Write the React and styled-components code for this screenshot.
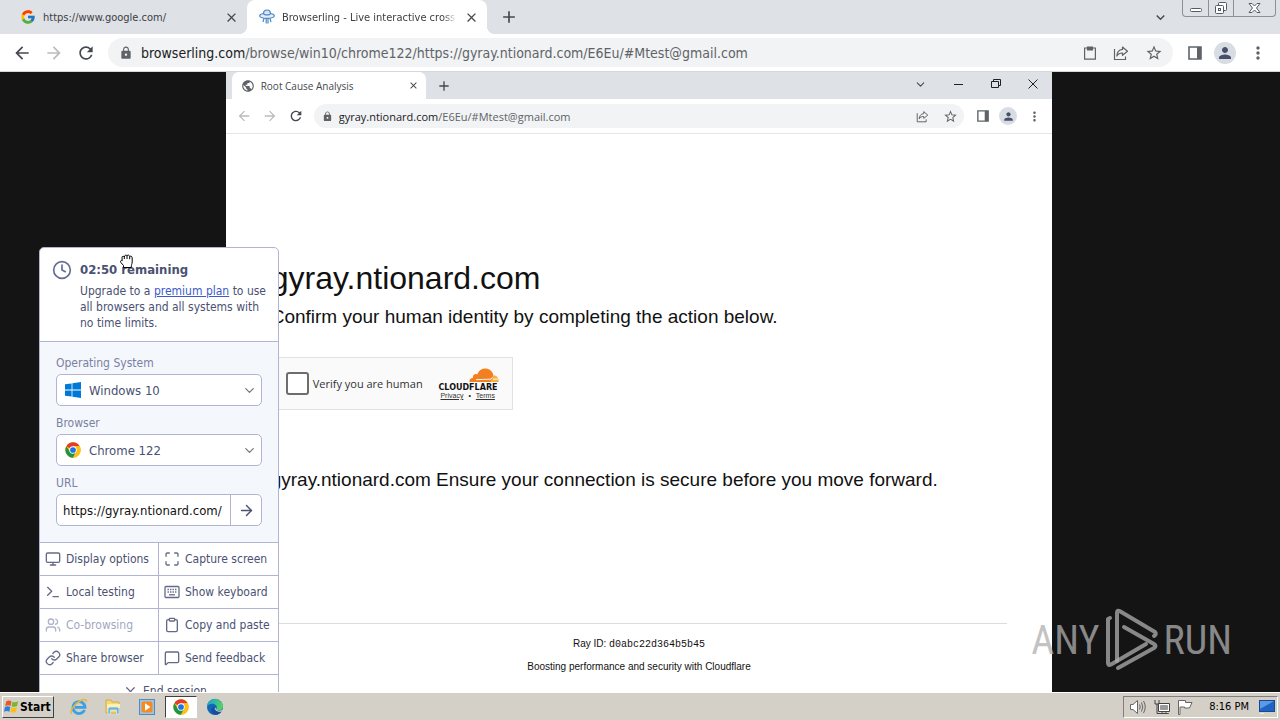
import React, { useState } from "react";
import styled, { createGlobalStyle } from "styled-components";
import {
  Clock,
  Monitor,
  Maximize,
  Terminal,
  Users,
  Clipboard,
  Link as LinkIcon,
  MessageSquare,
  ChevronDown,
  ArrowRight,
  X,
} from "lucide-react";
import {
  MdArrowBack,
  MdArrowForward,
  MdRefresh,
  MdLock,
  MdStarBorder,
  MdPerson,
  MdMoreVert,
  MdClose,
  MdAdd,
  MdPublic,
  MdExpandMore,
} from "react-icons/md";
import { FcGoogle } from "react-icons/fc";

const ui = `"DejaVu Sans Condensed", "Noto Sans", sans-serif`;
const segoe = `"Open Sans", "Noto Sans", sans-serif`;

const ChromeLogo = ({ size = 16 }) => (
  <svg width={size} height={size} viewBox="0 0 48 48">
    <circle cx="24" cy="24" r="23" fill="#fbc116" />
    <path d="M24 24L4.1 12.5A23 23 0 0 1 43.9 12.5L24 13Z" fill="#e33b2e" />
    <path d="M4.1 12.5A23 23 0 0 0 24 47L33.5 29.5L24 34L14.5 29.5Z" fill="#229342" />
    <path d="M24 13H44.2A23 23 0 0 1 24 47L33.5 29.5Z" fill="#fbc116" />
    <circle cx="24" cy="24" r="11" fill="#fff" />
    <circle cx="24" cy="24" r="8.6" fill="#1a73e8" />
  </svg>
);

const WindowsLogo = () => (
  <svg width="16" height="16" viewBox="0 0 16 16" fill="#0078d7">
    <path d="M0 2.3L6.6 1.4V7.6H0ZM7.4 1.3L16 0V7.6H7.4ZM0 8.4H6.6V14.6L0 13.7ZM7.4 8.4H16V16L7.4 14.7Z" />
  </svg>
);

const UfoLogo = () => (
  <svg width="16" height="16" viewBox="0 0 16 16" fill="none" stroke="#4f86c6" strokeWidth="1.2">
    <path d="M4.5 4.5a3.5 3.5 0 0 1 7 0" fill="#cfe0f3" />
    <path d="M4.5 4.5C1.5 5 .6 6 .7 7C1 9 4.5 9.3 8 9.3S15 9 15.3 7C15.4 6 14.5 5 11.5 4.5C11 6.3 5 6.3 4.5 4.5Z" fill="#e4eefa" />
    <path d="M5 9.3L4 13M7.2 9.3v5.2M9 9.3v5.2M11 9.3l1 3.7" />
  </svg>
);

const ShareIcon = ({ size = 16 }) => (
  <svg width={size} height={size} viewBox="0 0 16 16" fill="none" stroke="#5f6368" strokeWidth="1.2">
    <path d="M1.5 4V14.5H12.5V11.5" />
    <path d="M9.5 2L14.5 6.3L9.5 10.3V8C6.5 8 5 9 3.9 11C4 7.6 6 4.8 9.5 4.4Z" strokeLinejoin="round" />
  </svg>
);

const SidePanelIcon = ({ size = 14 }) => (
  <svg width={size} height={size} viewBox="0 0 14 14">
    <path d="M1 1H13V13H1Z" fill="none" stroke="#5f6368" strokeWidth="1.6" />
    <path d="M9 1H13V13H9Z" fill="#5f6368" />
  </svg>
);

const PasteIcon = () => (
  <svg width="14" height="14" viewBox="0 0 14 14" fill="none" stroke="#5f6368" strokeWidth="1.2">
    <path d="M1.6 2H12.4V13.2H1.6Z" />
    <path d="M4.5 1H9.5V4H4.5Z" fill="#5f6368" />
  </svg>
);

const KeyboardIcon = () => (
  <svg width="16" height="16" viewBox="0 0 16 16" fill="none" stroke="currentColor" strokeWidth="1.3">
    <rect x="1" y="2.5" width="14" height="11" rx="1" />
    <path d="M3.5 5.5h9M3.5 8h9" strokeDasharray="1.4 1.1" />
    <path d="M5 10.8h6" />
  </svg>
);

const GrabCursor = () => (
  <svg width="16" height="16" viewBox="0 0 16 16" fill="#fff" stroke="#000">
    <path
      d="M4.5 14.5V12.5L1.8 9.4C1 8.2 2 7 3.2 7.8L3 4.4C3 3 5 2.8 5.3 4C5.3 1.8 7.8 1.6 8 3C8.3 1.6 10.5 1.8 10.7 3.6C11.2 2.8 13.2 3 13.2 4.8V9C13.2 11 12.2 11.6 12.2 14.5Z"
      strokeLinejoin="round"
    />
    <path d="M5.3 4v2M8 3v3M10.7 3.6v2.6" fill="none" />
  </svg>
);

const CloudflareLogo = () => (
  <svg width="64" height="24" viewBox="0 0 64 24">
    <path
      d="M33.5 15C33 12.6 34.6 11 37 10.8C36.4 8 39 6.4 41.2 7.4C42.8 3.6 45.8 1.6 49 1.6C53.4 1.6 56.2 4.2 57.4 8L55.2 15Z"
      fill="#f38020"
    />
    <path d="M57.6 8.2C60.8 8.2 63 11 62.6 15H54.4Z" fill="#faae40" />
    <path d="M40 12.6L55 12.2L56 10.6M57 12.2L62 12" stroke="#fff" strokeWidth=".9" fill="none" />
    <text
      x="32"
      y="23"
      textAnchor="middle"
      fontFamily="'DejaVu Sans', sans-serif"
      fontWeight="700"
      fontSize="8"
      fill="#111"
    >
      CLOUDFLARE
    </text>
  </svg>
);

const PlayMark = () => (
  <svg width="56" height="64" viewBox="0 0 56 64" fill="none" stroke="currentColor" strokeWidth="4" strokeLinejoin="round" strokeLinecap="round">
    <path d="M6 10L4 11V55Q4 58 7 56.4L42 36" />
    <path d="M13 53V5Q13 1.5 16 3.2L51 24Q53 26 50 28" />
    <path d="M20 19L50 36Q53 38 50 40L14 60" />
  </svg>
);

const StartFlag = () => (
  <svg width="15" height="15" viewBox="0 0 16 16">
    <path d="M2.5 2.5C4.5 1 6.5 1.5 8 2.5L7 7.5C5.5 6.5 3.5 6.5 1.2 7.5Z" fill="#e8572b" />
    <path d="M9 3C11 4 13 3.5 15 2.5L14 7.5C12 8.7 10 8.5 8 7.7Z" fill="#7ab829" />
    <path d="M1 8.5C3 7.5 5 7.5 6.7 8.5L5.7 13.5C4 12.5 2 12.5 0 13.5Z" fill="#2f7fd6" />
    <path d="M7.8 8.8C10 10 12 9.7 13.8 8.7L12.8 13.5C11 14.7 8.5 14.7 6.8 13.7Z" fill="#fbbd1c" />
  </svg>
);

const IeIcon = () => (
  <svg width="18" height="18" viewBox="0 0 18 18" fill="none">
    <path d="M14.5 12A6 6 0 1 1 15 9.4H5" stroke="#3ba0e6" strokeWidth="2.8" />
    <path d="M2 16C-1 14 4 6 10 3C14 1 17 1 16.3 4" stroke="#e9b634" strokeWidth="1.5" />
  </svg>
);

const ExplorerIcon = () => (
  <svg width="18" height="18" viewBox="0 0 18 18">
    <path d="M2 2H7L8 4H15V15H2Z" fill="#f5d77a" stroke="#d5ac42" />
    <path d="M3 6H16V10H3Z" fill="#fff0ae" />
    <path d="M4 16V11Q4 9 6 9H13Q15 9 15 11V16H12.5V12H6.5V16Z" fill="#69b5dd" stroke="#eaf6fc" strokeWidth=".6" />
  </svg>
);

const MediaIcon = () => (
  <svg width="18" height="18" viewBox="0 0 18 18">
    <rect x="1.5" y="1.5" width="15" height="15" fill="#9bc5e8" stroke="#5489bb" />
    <rect x="3.5" y="3.5" width="11" height="11" rx="2" fill="#f68a1f" />
    <path d="M7 5.2L12.5 9L7 12.8Z" fill="#fff" />
  </svg>
);

const EdgeIcon = () => (
  <svg width="18" height="18" viewBox="0 0 18 18">
    <defs>
      <linearGradient id="edgeTop" x1="0" y1="0" x2="1" y2="0.4">
        <stop offset="0" stopColor="#1d9be0" />
        <stop offset="1" stopColor="#52d265" />
      </linearGradient>
    </defs>
    <circle cx="9" cy="9" r="8" fill="#1267b6" />
    <path d="M1 9A8 8 0 0 1 17 8.5C17 12 13 13 10.5 11.5C12 8 9 5.5 6 5.8C3.5 6 1.5 7 1 9Z" fill="url(#edgeTop)" />
    <path d="M8 8C6.5 11 9 14.5 15.6 13.3C13.5 17 9 17.8 6.5 15.5C4.5 13.5 5 9.5 8 8Z" fill="#1b4c99" />
    <path d="M10.5 11.5C12 13.3 15 13 17.5 11L15.9 13.3C13 14.5 10 13.5 9 11Q9.5 9 10 10Z" fill="#d4d0c8" />
  </svg>
);

const SpeakerIcon = () => (
  <svg width="18" height="16" viewBox="0 0 18 16" stroke="#666" fill="none">
    <path d="M1.5 5.5H4L8.5 1.5V14.5L4 10.5H1.5Z" fill="#fff" />
    <path d="M10.5 5.5Q12 8 10.5 10.5M12.5 3.5Q15 8 12.5 12.5M14.5 2Q18 8 14.5 14" />
  </svg>
);

const NetworkIcon = () => (
  <svg width="16" height="16" viewBox="0 0 16 16" stroke="#444" fill="#fff">
    <path d="M4.5 4.5H15.5V12.5H4.5ZM8 12.5V14.5H5.5M12 12.5V14.5H14.5M5.5 14.5H14.5" />
    <path d="M6.5 6.5H13.5V10.5H6.5Z" fill="#999" stroke="#999" />
    <path d="M1 1V5H5V1M3 5V14.5H6" fill="none" />
  </svg>
);

const FlagIcon = () => (
  <svg width="16" height="16" viewBox="0 0 16 16" stroke="#666" fill="#fff">
    <path d="M1.5 1.5H8.5V3.5H15L12.5 9H7.5V8H3V15.5H1.5Z" />
  </svg>
);

const DesktopIcon = () => (
  <svg width="16" height="14" viewBox="0 0 16 14">
    <rect x=".5" y=".5" width="15" height="11" fill="#1f63c4" stroke="#174a8f" />
    <path d="M1 1H15L1 9Z" fill="#5b9ae6" />
    <path d="M1 13.5H5" stroke="#eee" />
  </svg>
);

const actions = [
  { label: "Display options", icon: <Monitor size={16} /> },
  { label: "Capture screen", icon: <Maximize size={16} /> },
  { label: "Local testing", icon: <Terminal size={16} /> },
  { label: "Show keyboard", icon: <KeyboardIcon /> },
  { label: "Co-browsing", icon: <Users size={16} />, disabled: true },
  { label: "Copy and paste", icon: <Clipboard size={16} /> },
  { label: "Share browser", icon: <LinkIcon size={16} /> },
  { label: "Send feedback", icon: <MessageSquare size={16} /> },
];

const ControlPanel = () => {
  const [os, setOs] = useState("Windows 10");
  const [browser, setBrowser] = useState("Chrome 122");
  const [url, setUrl] = useState("https://gyray.ntionard.com/");

  return (
    <Panel>
      <PanelHeader>
        <Clock size={20} strokeWidth={2} color="#666d92" />
        <div>
          <Remaining>02:50 remaining</Remaining>
          <Hint>
            Upgrade to a <a href="#plan">premium plan</a> to use all browsers and all systems with
            no time limits.
          </Hint>
        </div>
        <CursorSpot>
          <GrabCursor />
        </CursorSpot>
      </PanelHeader>
      <Form onSubmit={(e) => e.preventDefault()}>
        <Label htmlFor="os">Operating System</Label>
        <Field>
          <WindowsLogo />
          <Select id="os" value={os} onChange={(e) => setOs(e.target.value)}>
            <option>Windows 10</option>
          </Select>
          <ChevronDown size={15} color="#777" />
        </Field>
        <Label htmlFor="browser">Browser</Label>
        <Field>
          <ChromeLogo />
          <Select id="browser" value={browser} onChange={(e) => setBrowser(e.target.value)}>
            <option>Chrome 122</option>
          </Select>
          <ChevronDown size={15} color="#777" />
        </Field>
        <Label htmlFor="url">URL</Label>
        <UrlField>
          <UrlInput id="url" value={url} onChange={(e) => setUrl(e.target.value)} />
          <GoButton aria-label="Go">
            <ArrowRight size={17} />
          </GoButton>
        </UrlField>
      </Form>
      <Actions>
        {actions.map((a) => (
          <Action key={a.label} disabled={a.disabled}>
            {a.icon}
            {a.label}
          </Action>
        ))}
        <Action $wide>
          <X size={15} />
          End session
        </Action>
      </Actions>
    </Panel>
  );
};

const RemoteBrowser = () => (
  <Remote>
    <RemoteTabs>
      <RemoteTab>
        <MdPublic size={14} color="#5f6368" />
        <span>Root Cause Analysis</span>
        <IconButton aria-label="Close tab">
          <MdClose size={11} />
        </IconButton>
      </RemoteTab>
      <IconButton aria-label="New tab">
        <MdAdd size={16} />
      </IconButton>
      <RemoteControls>
        <IconButton aria-label="Search tabs">
          <ChevronDown size={13} />
        </IconButton>
        <IconButton aria-label="Minimize">
          <svg width="10" height="10" stroke="#222">
            <path d="M0 5.5H9" />
          </svg>
        </IconButton>
        <IconButton aria-label="Restore">
          <svg width="10" height="10" stroke="#222" fill="none">
            <path d="M.5 2.5H7.5V8.5H.5ZM2.5 2V.5H9.5V6.5H8" />
          </svg>
        </IconButton>
        <IconButton aria-label="Close">
          <svg width="10" height="10" stroke="#222">
            <path d="M.5 .5L9.5 9.5M9.5 .5L.5 9.5" />
          </svg>
        </IconButton>
      </RemoteControls>
    </RemoteTabs>
    <RemoteBar>
      <IconButton aria-label="Back" $muted>
        <MdArrowBack size={16} />
      </IconButton>
      <IconButton aria-label="Forward" $muted>
        <MdArrowForward size={16} />
      </IconButton>
      <IconButton aria-label="Reload">
        <MdRefresh size={16} />
      </IconButton>
      <RemoteAddress>
        <MdLock size={11} color="#5f6368" />
        <AddressText>
          <b>gyray.ntionard.com</b>/E6Eu/#Mtest@gmail.com
        </AddressText>
        <ShareIcon size={13} />
        <MdStarBorder size={15} />
      </RemoteAddress>
      <SidePanelIcon size={12} />
      <Avatar $size={18}>
        <MdPerson size={13} />
      </Avatar>
      <MdMoreVert size={15} />
    </RemoteBar>
    <Page>
      <Title>gyray.ntionard.com</Title>
      <Lead>Confirm your human identity by completing the action below.</Lead>
      <Challenge>
        <HumanLabel>
          <HumanCheck type="checkbox" />
          Verify you are human
        </HumanLabel>
        <Brand>
          <CloudflareLogo />
          <BrandLinks>
            <a href="#privacy">Privacy</a>
            <span>•</span>
            <a href="#terms">Terms</a>
          </BrandLinks>
        </Brand>
      </Challenge>
      <Lead>gyray.ntionard.com Ensure your connection is secure before you move forward.</Lead>
      <Footer>
        <div>
          Ray ID: <code>d0abc22d364b5b45</code>
        </div>
        <div>Boosting performance and security with Cloudflare</div>
      </Footer>
    </Page>
  </Remote>
);

const App = () => (
  <Desktop>
    <GlobalStyle />
    <TabStrip>
      <Tab>
        <FcGoogle size={16} />
        <TabTitle>https://www.google.com/</TabTitle>
        <IconButton aria-label="Close tab">
          <MdClose size={15} />
        </IconButton>
      </Tab>
      <Tab $active>
        <UfoLogo />
        <TabTitle $fade>Browserling - Live interactive cross-b</TabTitle>
        <IconButton aria-label="Close tab">
          <MdClose size={15} />
        </IconButton>
      </Tab>
      <NewTab aria-label="New tab">
        <MdAdd size={20} />
      </NewTab>
      <TabSearch aria-label="Search tabs">
        <MdExpandMore size={17} />
      </TabSearch>
      <WindowButtons>
        <WindowButton aria-label="Minimize">
          <svg width="12" height="14" fill="#fff" stroke="#555a66">
            <rect x=".5" y="7.5" width="11" height="3" rx="1" />
          </svg>
        </WindowButton>
        <WindowButton aria-label="Restore">
          <svg width="14" height="14" fill="#fff" stroke="#555a66">
            <rect x="4.5" y="1.5" width="8" height="8" rx="1" />
            <rect x="1.5" y="4.5" width="8" height="8" rx="1" />
            <rect x="4.5" y="7.5" width="2" height="2" />
          </svg>
        </WindowButton>
        <WindowButton aria-label="Close" $wide>
          <svg width="13" height="12" fill="#fff" stroke="#555a66">
            <path d="M1 1.5H4L6.5 4L9 1.5H12L8.5 6L12 10.5H9L6.5 8L4 10.5H1L4.5 6Z" />
          </svg>
        </WindowButton>
      </WindowButtons>
    </TabStrip>
    <Toolbar>
      <IconButton aria-label="Back">
        <MdArrowBack size={20} />
      </IconButton>
      <IconButton aria-label="Forward" $muted>
        <MdArrowForward size={20} />
      </IconButton>
      <IconButton aria-label="Reload">
        <MdRefresh size={20} />
      </IconButton>
      <Address>
        <MdLock size={14} color="#5f6368" />
        <AddressText>
          <b>browserling.com</b>/browse/win10/chrome122/https://gyray.ntionard.com/E6Eu/#Mtest@gmail.com
        </AddressText>
        <PasteIcon />
        <ShareIcon />
        <MdStarBorder size={18} />
      </Address>
      <SidePanelIcon />
      <Avatar $size={22}>
        <MdPerson size={18} />
      </Avatar>
      <MdMoreVert size={20} />
    </Toolbar>
    <Stage>
      <RemoteBrowser />
      <ControlPanel />
      <Watermark>
        <span>ANY</span>
        <PlayMark />
        <span>RUN</span>
      </Watermark>
    </Stage>
    <Taskbar>
      <StartButton>
        <StartFlag />
        Start
      </StartButton>
      <TaskButton aria-label="Internet Explorer">
        <IeIcon />
      </TaskButton>
      <TaskButton aria-label="Explorer">
        <ExplorerIcon />
      </TaskButton>
      <TaskButton aria-label="Media Player">
        <MediaIcon />
      </TaskButton>
      <TaskButton aria-label="Chrome" $active>
        <ChromeLogo />
      </TaskButton>
      <TaskButton aria-label="Edge">
        <EdgeIcon />
      </TaskButton>
      <Tray>
        <SpeakerIcon />
        <NetworkIcon />
        <FlagIcon />
        <time>8:16 PM</time>
        <DesktopIcon />
      </Tray>
    </Taskbar>
  </Desktop>
);

const GlobalStyle = createGlobalStyle`
  * {
    box-sizing: border-box;
  }
  body {
    margin: 0;
    font-family: ${ui};
  }
  button, input, select {
    font-family: inherit;
  }
  svg {
    flex-shrink: 0;
  }
`;
const Desktop = styled.div`
  display: flex;
  flex-direction: column;
  height: 100vh;
  overflow: hidden;
`;
const IconButton = styled.button`
  display: flex;
  align-items: center;
  justify-content: center;
  padding: 0;
  border: 0;
  background: none;
  color: ${(p) => (p.$muted ? "#babcbe" : "#45484d")};
`;
const TabStrip = styled.div`
  display: flex;
  flex-shrink: 0;
  height: 34px;
  background-color: #dee1e6;
`;
const Tab = styled.div`
  position: relative;
  display: flex;
  align-items: center;
  gap: 7px;
  width: ${(p) => (p.$active ? "240px" : "247px")};
  padding: 0 8px 0 ${(p) => (p.$active ? "12px" : "20px")};
  border-radius: 8px 8px 0 0;
  background-color: ${(p) => (p.$active ? "#fff" : "transparent")};

  &::before,
  &::after {
    content: ${(p) => (p.$active ? '""' : "none")};
    position: absolute;
    bottom: 0;
    width: 8px;
    height: 8px;
  }
  &::before {
    right: 100%;
    background: radial-gradient(circle at 0 0, transparent 8px, #fff 8px);
  }
  &::after {
    left: 100%;
    background: radial-gradient(circle at 100% 0, transparent 8px, #fff 8px);
  }
`;
const TabTitle = styled.span`
  flex: 1;
  overflow: hidden;
  white-space: nowrap;
  font-size: 11px;
  color: #3c4043;
  mask-image: ${(p) => (p.$fade ? "linear-gradient(to right, #000 92%, transparent)" : "none")};
`;
const NewTab = styled(IconButton)`
  margin-left: 12px;
`;
const TabSearch = styled(IconButton)`
  margin-left: auto;
  margin-right: 13px;
`;
const WindowButtons = styled.div`
  display: flex;
  height: 17px;
  margin-right: 4px;
  border: 1px solid #8b909b;
  border-top: 0;
  border-radius: 0 0 4px 4px;
`;
const WindowButton = styled.button`
  display: flex;
  align-items: center;
  justify-content: center;
  width: ${(p) => (p.$wide ? "42px" : "25px")};
  padding: 0;
  border: 0;
  background: none;

  & + & {
    border-left: 1px solid #8b909b;
  }
`;
const Toolbar = styled.div`
  display: flex;
  flex-shrink: 0;
  align-items: center;
  gap: 12px;
  height: 38px;
  padding: 0 12px;
  border-bottom: 1px solid #d5d7da;
  background-color: #fff;
  color: #5f6368;
`;
const Address = styled.div`
  display: flex;
  flex: 1;
  align-items: center;
  gap: 16px;
  height: 29px;
  margin-right: 3px;
  padding: 0 10px 0 11px;
  border-radius: 15px;
  background-color: #f1f3f4;
  font-size: 14px;
`;
const AddressText = styled.span`
  flex: 1;
  margin-left: -8px;
  overflow: hidden;
  white-space: nowrap;
  color: #5f6368;

  b {
    font-weight: 400;
    color: #202124;
  }
`;
const Avatar = styled.span`
  display: flex;
  align-items: center;
  justify-content: center;
  width: ${(p) => p.$size}px;
  height: ${(p) => p.$size}px;
  border-radius: 50%;
  background-color: #d8dde3;
  color: #47506b;
`;
const Stage = styled.main`
  position: relative;
  display: flex;
  flex: 1;
  justify-content: center;
  min-height: 0;
  padding-right: 2px;
  overflow: hidden;
  background-color: #141414;
`;
const Remote = styled.section`
  display: flex;
  flex-direction: column;
  height: 100%;
  aspect-ratio: 4 / 3;
  background-color: #fff;
  font-family: ${segoe};
`;
const RemoteTabs = styled.div`
  display: flex;
  flex-shrink: 0;
  gap: 10px;
  height: 27px;
  padding-left: 6px;
  background-color: #dee1e6;
`;
const RemoteTab = styled.div`
  display: flex;
  align-items: center;
  gap: 6px;
  width: 194px;
  padding: 0 7px 0 9px;
  border-radius: 7px 7px 0 0;
  background-color: #fff;
  font-size: 10px;
  color: #45484d;

  span {
    flex: 1;
  }
`;
const RemoteControls = styled.div`
  display: flex;
  align-items: center;
  gap: 27px;
  height: 24px;
  margin-left: auto;
  padding-right: 14px;
`;
const RemoteBar = styled.div`
  display: flex;
  flex-shrink: 0;
  align-items: center;
  gap: 10px;
  height: 35px;
  padding: 0 10px;
  border-bottom: 1px solid #e4e5e7;
  color: #5f6368;
`;
const RemoteAddress = styled(Address)`
  gap: 14px;
  height: 24px;
  padding: 0 6px 0 8px;
  font-size: 11px;
`;
const Page = styled.div`
  display: flex;
  flex: 1;
  flex-direction: column;
  min-height: 0;
  padding: 124px 45px 0;
  font-family: "Liberation Sans", Arial, sans-serif;
  color: #111;
`;
const Title = styled.h1`
  margin: 0;
  font-size: 32px;
  font-weight: 400;
  line-height: 40px;
`;
const Lead = styled.h2`
  margin: 0;
  padding-top: 7px;
  font-size: 19px;
  font-weight: 400;
  line-height: 24px;
  white-space: nowrap;
`;
const Challenge = styled.div`
  display: flex;
  align-items: center;
  justify-content: space-between;
  width: 242px;
  height: 53px;
  margin: 28px 0 51px;
  padding: 0 12px 0 14px;
  border: 1px solid #e2e2e2;
  background-color: #fafafa;
`;
const HumanLabel = styled.label`
  display: flex;
  align-items: center;
  gap: 4px;
  font-family: ${segoe};
  font-size: 11px;
  color: #333;
`;
const HumanCheck = styled.input`
  appearance: none;
  width: 23px;
  height: 23px;
  margin: 0;
  border: 2px solid #6d6d6d;
  border-radius: 3px;
  background-color: #fff;
`;
const Brand = styled.div`
  display: flex;
  flex-direction: column;
  align-items: center;
`;
const BrandLinks = styled.div`
  display: flex;
  gap: 5px;
  font-size: 7px;
  line-height: 10px;

  a {
    color: #333;
  }
`;
const Footer = styled.footer`
  display: flex;
  flex-direction: column;
  gap: 10px;
  margin-top: auto;
  padding: 14px 0 19px;
  border-top: 1px solid #dcdcdc;
  font-size: 10px;
  line-height: 12px;
  text-align: center;

  code {
    font-family: "Liberation Mono", monospace;
  }
`;
const Panel = styled.aside`
  position: absolute;
  top: 175px;
  left: 39px;
  width: 240px;
  border: 1px solid #b1b5d3;
  border-radius: 5px;
  background-color: #fff;
  color: #4a5172;
  font-size: 12px;
`;
const PanelHeader = styled.header`
  position: relative;
  display: flex;
  gap: 8px;
  padding: 12px 12px 10px;
`;
const Remaining = styled.div`
  font-size: 13px;
  font-weight: 700;
  line-height: 20px;
`;
const Hint = styled.p`
  margin: 3px 0 0;
  line-height: 16px;

  a {
    color: #3b5bcc;
  }
`;
const CursorSpot = styled.span`
  position: absolute;
  top: 5px;
  left: 79px;
`;
const Form = styled.form`
  padding: 13px 16px 16px;
  border-top: 1px solid #b1b5d3;
  border-bottom: 1px solid #b1b5d3;
  background-color: #f4f7fb;
`;
const Label = styled.label`
  display: block;
  line-height: 16px;
  margin-bottom: 3px;
  color: #7b81a2;
`;
const Field = styled.div`
  display: flex;
  align-items: center;
  gap: 8px;
  height: 32px;
  margin-bottom: 9px;
  padding: 0 4px 0 8px;
  border: 1px solid #b1b5d3;
  border-radius: 5px;
  background-color: #fff;
`;
const Select = styled.select`
  appearance: none;
  flex: 1;
  padding: 0;
  border: 0;
  background: none;
  color: #4a5172;
  font-size: 13px;
`;
const UrlField = styled(Field)`
  gap: 0;
  margin-bottom: 0;
  padding: 0;
`;
const UrlInput = styled.input`
  flex: 1;
  min-width: 0;
  padding: 0 6px;
  border: 0;
  background: none;
  font-size: 13px;
  color: #111;
`;
const GoButton = styled(IconButton)`
  width: 31px;
  height: 100%;
  border-left: 1px solid #b1b5d3;
  color: #4a5172;
`;
const Actions = styled.div`
  display: grid;
  grid-template-columns: 118px 1fr;
  gap: 1px;
  background-color: #b1b5d3;
`;
const Action = styled.button`
  display: flex;
  grid-column: ${(p) => (p.$wide ? "1 / -1" : "auto")};
  align-items: center;
  justify-content: ${(p) => (p.$wide ? "center" : "flex-start")};
  gap: 5px;
  height: 32px;
  padding: ${(p) => (p.$wide ? "0 0 0 12px" : "0 5px")};
  border: 0;
  background-color: #fff;
  color: #4a5172;
  font-size: 12px;
  white-space: nowrap;

  svg {
    opacity: 0.85;
  }
  &:disabled {
    color: #a3a7c0;
  }
`;
const Watermark = styled.div`
  position: absolute;
  right: 48px;
  bottom: 20px;
  display: flex;
  align-items: center;
  gap: 4px;
  color: rgba(175, 175, 175, 0.75);
  font-family: "Roboto Condensed", Roboto, sans-serif;
  font-size: 40px;
  font-weight: 400;
`;
const Taskbar = styled.footer`
  display: flex;
  flex-shrink: 0;
  align-items: center;
  gap: 2px;
  height: 28px;
  padding: 0 2px;
  border-top: 1px solid #fff;
  background-color: #d4d0c8;
`;
const StartButton = styled.button`
  display: flex;
  align-items: center;
  gap: 1px;
  width: 52px;
  height: 22px;
  margin-right: 7px;
  padding: 0 1px;
  border: 1px solid;
  border-color: #fff #404040 #404040 #fff;
  background-color: #d4d0c8;
  font-size: 12px;
  font-weight: 700;
`;
const TaskButton = styled.button`
  display: flex;
  align-items: center;
  justify-content: center;
  width: 32px;
  height: 22px;
  padding: 0;
  border: 1px solid;
  border-color: ${(p) => (p.$active ? "#404040 #fff #fff #404040" : "transparent")};
  background-color: ${(p) => (p.$active ? "#fff" : "transparent")};
`;
const Tray = styled.div`
  display: flex;
  align-items: center;
  gap: 7px;
  height: 22px;
  margin-left: auto;
  padding: 0 2px 0 5px;
  border: 1px solid;
  border-color: #808080 #fff #fff #808080;
  font-size: 11px;

  time {
    margin: 0 3px 0 9px;
  }
`;

export default App;
